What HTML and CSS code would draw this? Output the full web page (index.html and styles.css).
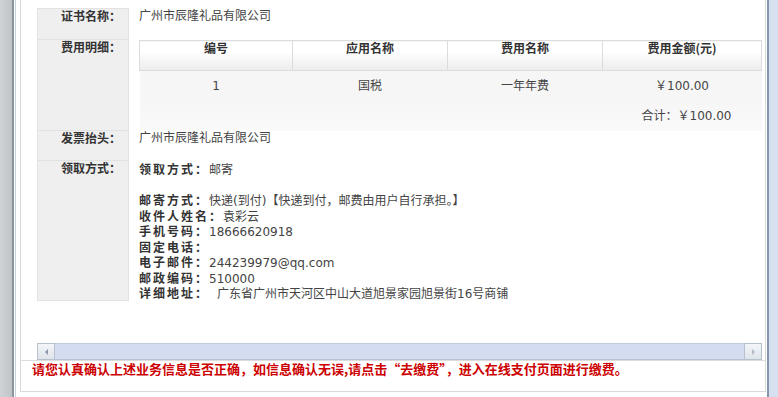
FILE: index.html
```html
<!DOCTYPE html>
<html lang="zh-CN">
<head>
    <meta charset="UTF-8">
    <title>业务信息确认</title>
    <link rel="stylesheet" href="styles.css">
</head>
<body>
    <div class="frame">
        <div class="side-left"></div>
        <div class="main">
            <div class="box">
                <div class="scroll">
                    <div class="info">
                        <div class="row row-cert">
                            <div class="label">证书名称：</div>
                            <div class="value">广州市辰隆礼品有限公司</div>
                        </div>

                        <div class="row row-fee">
                            <div class="label">费用明细：</div>
                            <div class="value">
                                <table class="fee">
                                    <colgroup>
                                        <col style="width: 153px">
                                        <col style="width: 155px">
                                        <col style="width: 155px">
                                        <col>
                                    </colgroup>
                                    <tr class="fee-head">
                                        <th>编号</th>
                                        <th>应用名称</th>
                                        <th>费用名称</th>
                                        <th>费用金额(元)</th>
                                    </tr>
                                    <tr class="fee-data">
                                        <td>1</td>
                                        <td>国税</td>
                                        <td>一年年费</td>
                                        <td>￥100.00</td>
                                    </tr>
                                    <tr class="fee-total">
                                        <td colspan="4">合计：￥100.00</td>
                                    </tr>
                                </table>
                            </div>
                        </div>

                        <div class="row row-invoice">
                            <div class="label">发票抬头：</div>
                            <div class="value">广州市辰隆礼品有限公司</div>
                        </div>

                        <div class="row row-take">
                            <div class="label">领取方式：</div>
                            <div class="value">
                                <p><b>领取方式：</b>邮寄</p>
                                <p>&nbsp;</p>
                                <p><b>邮寄方式：</b>快递(到付)【快递到付，邮费由用户自行承担。】</p>
                                <p><b>收件人姓名：</b>袁彩云</p>
                                <p><b>手机号码：</b>18666620918</p>
                                <p><b>固定电话：</b></p>
                                <p><b>电子邮件：</b>244239979@qq.com</p>
                                <p><b>邮政编码：</b>510000</p>
                                <p><b>详细地址：</b><span class="addr">广东省广州市天河区中山大道旭景家园旭景街16号商铺</span></p>
                            </div>
                        </div>
                    </div>

                    <!-- 横向滚动条 -->
                    <div class="hscroll">
                        <div class="hs-btn hs-left"><span></span></div>
                        <div class="hs-track"></div>
                        <div class="hs-btn hs-right"><span></span></div>
                    </div>
                </div>

                <div class="notice">请您认真确认上述业务信息是否正确，如信息确认无误,请点击“去缴费”，进入在线支付页面进行缴费。</div>
            </div>
        </div>
        <div class="side-right"></div>
    </div>
</body>
</html>
```

FILE: styles.css
```css
/* 页面整体 */
body {
    margin: 0;
    font-family: "DejaVu Sans", "Noto Sans CJK SC", sans-serif;
    font-size: 12px;
    color: #333;
    background: #fff;
}

.frame {
    display: flex;
    height: 397px;
    overflow: hidden;
}

.side-left {
    width: 12px;
    background: linear-gradient(to right, #d0d3d6, #bfc4c8);
    border-right: 2px solid #8b959e;
}

.main {
    flex: 1;
    margin-left: 1px;
    border-left: 1px solid #c8d2de;
    padding: 0 1px 0 4px;
}

.side-right {
    width: 9px;
    background: #d7e0f0;
    border-left: 2px solid #8495ad;
}

/* 内容框 */
.box {
    height: 392px;
    box-sizing: border-box;
    border: 1px solid #dadada;
    border-top: none;
    display: flex;
    flex-direction: column;
}

.scroll {
    height: 360px;
    margin: 0 3px 0 16px;
    display: flex;
    flex-direction: column;
}

.info {
    flex: 1;
    padding-top: 8px;
}

/* 信息行 */
.row {
    display: flex;
}

.label {
    width: 92px;
    box-sizing: border-box;
    flex-shrink: 0;
    background: #efefef;
    border: 1px solid #e2e2e2;
    border-top: none;
    padding-right: 7px;
    text-align: right;
    font-family: "Noto Sans CJK SC", sans-serif;
    font-weight: bold;
    line-height: 14px;
}

.value {
    flex: 1;
    padding-left: 10px;
    line-height: 14px;
    color: #444;
}

.row-cert .label {
    border-top: 1px solid #e2e2e2;
    height: 32px;
}

.row-cert .value {
    padding-top: 1px;
}

.row-fee .label {
    height: 91px;
}

.row-invoice .label {
    height: 30px;
}

.row-take .label {
    height: 140px;
}

.row-take .value {
    line-height: 15px;
}

.row-take p {
    margin: 0;
    height: 15.5px;
    white-space: nowrap;
}

.row-take b {
    font-family: "Noto Sans CJK SC", sans-serif;
    letter-spacing: 2px;
    color: #333;
}

.addr {
    margin-left: 8px;
}

/* 费用明细表 */
.fee {
    width: 100%;
    border-collapse: collapse;
    table-layout: fixed;
    text-align: center;
}

.fee th {
    height: 29px;
    padding: 0;
    border: 1px solid #dcdcdc;
    background: linear-gradient(#ffffff, #ffffff 35%, #ececec);
    vertical-align: top;
    line-height: 14px;
    font-family: "Noto Sans CJK SC", sans-serif;
    font-weight: bold;
    color: #333;
}

.fee td {
    height: 30px;
    padding: 0;
    line-height: 14px;
}

.fee-data td {
    background: #f6f6f6;
}

.fee-total td {
    background: linear-gradient(#f6f6f6, #fafafa);
    text-align: right;
    padding-right: 30px;
}

/* 滚动条 */
.hscroll {
    display: flex;
    height: 17px;
}

.hs-btn {
    width: 18px;
    box-sizing: border-box;
    border: 1px solid #b7c0cd;
    background: linear-gradient(#f3f5f8, #dfe4eb);
    display: flex;
    align-items: center;
    justify-content: center;
}

.hs-left span {
    border-top: 3px solid transparent;
    border-bottom: 3px solid transparent;
    border-right: 3px solid #8a96a6;
}

.hs-right span {
    border-top: 3px solid transparent;
    border-bottom: 3px solid transparent;
    border-left: 3px solid #b0b8c4;
}

.hs-track {
    flex: 1;
    background: #d4dcf1;
    border-top: 1px solid #c3cadb;
    border-bottom: 1px solid #b9c1d2;
}

/* 提示文字 */
.notice {
    height: 30px;
    border-top: 1px solid #dcdcdc;
    padding: 1px 0 0 11px;
    line-height: 14px;
    font-family: "Noto Sans CJK SC", sans-serif;
    font-size: 13px;
    font-weight: bold;
    color: #cc0000;
    box-sizing: border-box;
}
```
